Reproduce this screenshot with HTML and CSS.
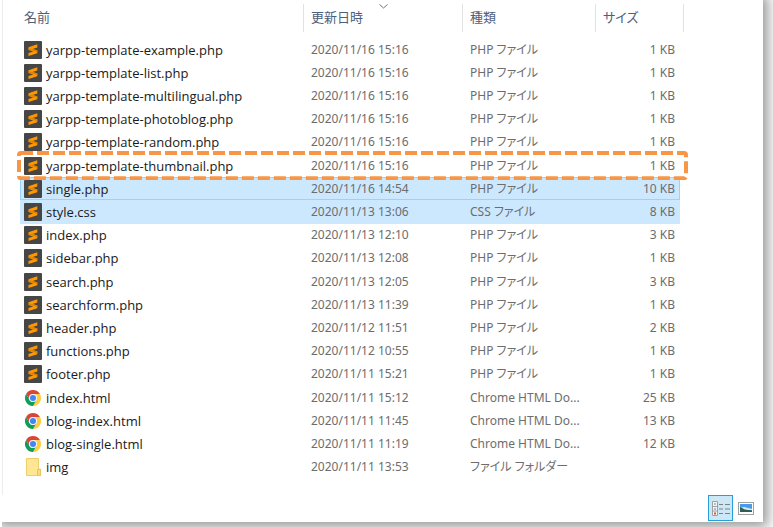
FILE: index.html
```html
<!DOCTYPE html>
<html lang="ja">
<head>
    <meta charset="UTF-8">
    <meta name="viewport" content="width=device-width, initial-scale=1">
    <title>Files</title>
    <link rel="stylesheet" href="styles.css">
</head>
<body>

    <!-- file icons -->
    <svg class="sprite" aria-hidden="true">
        <symbol id="sublime" viewBox="0 0 18 18">
            <rect width="18" height="18" rx="1" fill="#464646"/>
            <path d="M4.5 6.2 13.3 3.3V6.4L8.6 8 13.3 9.4V12.2L4.5 15V12L9.2 10.5 4.5 9Z" fill="#ff9800"/>
            <path d="M8.6 8 13.3 9.4V11L4.5 8.4V7.4Z" fill="#e08300"/>
        </symbol>
        <symbol id="chrome" viewBox="0 0 18 18">
            <circle cx="9" cy="9" r="8" fill="#fff"/>
            <path d="M2.07 5A8 8 0 0 1 15.93 5H9A4 4 0 0 0 5.54 11Z" fill="#db4437"/>
            <path d="M15.93 5A8 8 0 0 1 9 17L12.46 11A4 4 0 0 0 9 5Z" fill="#ffcd40"/>
            <path d="M9 17A8 8 0 0 1 2.07 5L5.54 11A4 4 0 0 0 12.46 11Z" fill="#0f9d58"/>
            <circle cx="9" cy="9" r="4" fill="#f1f1f1"/>
            <circle cx="9" cy="9" r="3" fill="#4285f4"/>
        </symbol>
        <symbol id="folder" viewBox="0 0 18 18">
            <path d="M2.5 .5H14.5V11H16.5V17.5H2.5Z" fill="#ffe694" stroke="#ecce6c"/>
            <path d="M13.5 17V11.5H16.5V17.5Z" fill="#f8dc80" stroke="#e6c660"/>
        </symbol>
    </svg>

    <div class="window">
        <main class="list">
            <table>
                <colgroup>
                    <col>
                    <col class="col-date">
                    <col class="col-type">
                    <col class="col-size">
                    <col class="col-end">
                </colgroup>
                <thead>
                    <tr>
                        <th><button type="button">名前</button></th>
                        <th class="sorted">
                            <button type="button">更新日時</button>
                            <svg class="caret" viewBox="0 0 9 5" aria-hidden="true"><path d="M.5 .5 4.5 4 8.5 .5" fill="none" stroke="#777"/></svg>
                        </th>
                        <th><button type="button">種類</button></th>
                        <th colspan="2"><button type="button">サイズ</button></th>
                    </tr>
                </thead>
                <tbody>
                    <tr>
                        <td><span class="file"><svg><use href="#sublime"/></svg>yarpp-template-example.php</span></td>
                        <td>2020/11/16 15:16</td><td>PHP ファイル</td><td>1 KB</td>
                    </tr>
                    <tr>
                        <td><span class="file"><svg><use href="#sublime"/></svg>yarpp-template-list.php</span></td>
                        <td>2020/11/16 15:16</td><td>PHP ファイル</td><td>1 KB</td>
                    </tr>
                    <tr>
                        <td><span class="file"><svg><use href="#sublime"/></svg>yarpp-template-multilingual.php</span></td>
                        <td>2020/11/16 15:16</td><td>PHP ファイル</td><td>1 KB</td>
                    </tr>
                    <tr>
                        <td><span class="file"><svg><use href="#sublime"/></svg>yarpp-template-photoblog.php</span></td>
                        <td>2020/11/16 15:16</td><td>PHP ファイル</td><td>1 KB</td>
                    </tr>
                    <tr>
                        <td><span class="file"><svg><use href="#sublime"/></svg>yarpp-template-random.php</span></td>
                        <td>2020/11/16 15:16</td><td>PHP ファイル</td><td>1 KB</td>
                    </tr>
                    <tr class="marked">
                        <td>
                            <span class="file"><svg><use href="#sublime"/></svg>yarpp-template-thumbnail.php</span>
                            <svg class="marker" aria-hidden="true"><rect x="2" y="2" rx="2"/></svg>
                        </td>
                        <td>2020/11/16 15:16</td><td>PHP ファイル</td><td>1 KB</td>
                    </tr>
                    <tr class="selected focused">
                        <td><span class="file"><svg><use href="#sublime"/></svg>single.php</span></td>
                        <td>2020/11/16 14:54</td><td>PHP ファイル</td><td>10 KB</td>
                    </tr>
                    <tr class="selected">
                        <td><span class="file"><svg><use href="#sublime"/></svg>style.css</span></td>
                        <td>2020/11/13 13:06</td><td>CSS ファイル</td><td>8 KB</td>
                    </tr>
                    <tr>
                        <td><span class="file"><svg><use href="#sublime"/></svg>index.php</span></td>
                        <td>2020/11/13 12:10</td><td>PHP ファイル</td><td>3 KB</td>
                    </tr>
                    <tr>
                        <td><span class="file"><svg><use href="#sublime"/></svg>sidebar.php</span></td>
                        <td>2020/11/13 12:08</td><td>PHP ファイル</td><td>1 KB</td>
                    </tr>
                    <tr>
                        <td><span class="file"><svg><use href="#sublime"/></svg>search.php</span></td>
                        <td>2020/11/13 12:05</td><td>PHP ファイル</td><td>3 KB</td>
                    </tr>
                    <tr>
                        <td><span class="file"><svg><use href="#sublime"/></svg>searchform.php</span></td>
                        <td>2020/11/13 11:39</td><td>PHP ファイル</td><td>1 KB</td>
                    </tr>
                    <tr>
                        <td><span class="file"><svg><use href="#sublime"/></svg>header.php</span></td>
                        <td>2020/11/12 11:51</td><td>PHP ファイル</td><td>2 KB</td>
                    </tr>
                    <tr>
                        <td><span class="file"><svg><use href="#sublime"/></svg>functions.php</span></td>
                        <td>2020/11/12 10:55</td><td>PHP ファイル</td><td>1 KB</td>
                    </tr>
                    <tr>
                        <td><span class="file"><svg><use href="#sublime"/></svg>footer.php</span></td>
                        <td>2020/11/11 15:21</td><td>PHP ファイル</td><td>1 KB</td>
                    </tr>
                    <tr>
                        <td><span class="file"><svg><use href="#chrome"/></svg>index.html</span></td>
                        <td>2020/11/11 15:12</td><td>Chrome HTML Do...</td><td>25 KB</td>
                    </tr>
                    <tr>
                        <td><span class="file"><svg><use href="#chrome"/></svg>blog-index.html</span></td>
                        <td>2020/11/11 11:45</td><td>Chrome HTML Do...</td><td>13 KB</td>
                    </tr>
                    <tr>
                        <td><span class="file"><svg><use href="#chrome"/></svg>blog-single.html</span></td>
                        <td>2020/11/11 11:19</td><td>Chrome HTML Do...</td><td>12 KB</td>
                    </tr>
                    <tr>
                        <td><span class="file"><svg><use href="#folder"/></svg>img</span></td>
                        <td>2020/11/11 13:53</td><td>ファイル フォルダー</td><td></td>
                    </tr>
                </tbody>
            </table>
        </main>

        <footer class="views">
            <button type="button" class="active" aria-label="詳細">
                <svg width="18" height="17" viewBox="0 0 18 17">
                    <path d="M.5 1.5H5.5V15.5H.5ZM.5 6.5H5.5M.5 11H5.5" fill="#f4f4f4" stroke="#a0a0a0"/>
                    <path d="M2 4H4" stroke="#888"/>
                    <path d="M2 9H4" stroke="#4a86d8"/>
                    <path d="M2 13.5H4" stroke="#e0503c" stroke-width="2"/>
                    <path d="M7 4.5H11M13 4.5H18M7 9H11M13 9H18M7 13.5H11M13 13.5H18" stroke="#808080"/>
                </svg>
            </button>
            <button type="button" aria-label="大アイコン">
                <svg width="16" height="13" viewBox="0 0 16 13">
                    <rect x=".5" y=".5" width="15" height="12" fill="#fff" stroke="#a0a0a0"/>
                    <rect x="2" y="2" width="12" height="8" fill="#4a9be8"/>
                    <path d="M2 6 6 5 14 7V8H2Z" fill="#d5ecfa"/>
                    <path d="M2 5 7 7.5 14 8.5V10H2Z" fill="#2f5f50"/>
                </svg>
            </button>
        </footer>
    </div>

</body>
</html>
```
FILE: styles.css
```css
* {
    box-sizing: border-box;
}

body {
    margin: 0;
    min-height: 100vh;
    padding: 0 10px 5px 2px;
    display: flex;
    overflow: hidden;
    background: #fff;
    font-family: "Noto Sans", "Noto Sans CJK JP", sans-serif;
    font-size: 12px;
    line-height: 18px;
    font-feature-settings: "palt";
    color: #1a1a1a;
}

.sprite {
    position: absolute;
    width: 0;
    height: 0;
}

/* the shadow only falls to the right and below */
.window {
    flex: 1;
    display: flex;
    flex-direction: column;
    background: #fff;
    box-shadow: 0 0 12px 5px #999;
    clip-path: inset(0 -10px -5px 0);
}

.list {
    flex: 1;
    border-left: 1px solid #ececec;
    padding: 4px 79px 15px 17px;
}

table {
    width: 100%;
    height: calc(100vh - 52px);
    table-layout: fixed;
    border-collapse: separate;
    border-spacing: 0;
}

.col-date {
    width: 159px;
}

.col-type {
    width: 133px;
}

.col-size {
    width: 84px;
}

.col-end {
    width: 4px;
}

/* header */
th {
    height: 28px;
    padding: 0 0 2px 4px;
    border-right: 1px solid #e2e2e2;
    text-align: left;
}

th + th {
    padding-left: 7px;
}

th button {
    padding: 0;
    border: none;
    background: none;
    font: inherit;
    font-size: 13px;
    font-weight: normal;
    color: #4c607a;
}

.sorted {
    position: relative;
}

.caret {
    position: absolute;
    top: 0;
    left: calc(50% - 4px);
    width: 9px;
    height: 5px;
}

/* gap between the header and the first row */
tbody::before {
    content: "";
    display: table-row;
    height: 6px;
}

/* rows */
td {
    height: 23px;
    padding: 0 0 0 7px;
    color: #6d6d6d;
    white-space: nowrap;
}

td:first-child {
    padding-left: 4px;
    font-family: "Open Sans", sans-serif;
    font-size: 13px;
    color: #1a1a1a;
}

td:nth-child(4) {
    padding-right: 5px;
    text-align: right;
}

.file {
    display: flex;
    align-items: center;
    gap: 4px;
}

.file svg {
    width: 18px;
    height: 18px;
}

.selected td {
    background: #cce8ff;
}

.focused td {
    border-top: 1px solid #99d1ff;
    border-bottom: 1px solid #99d1ff;
}

.focused td:first-child {
    border-left: 1px solid #99d1ff;
    padding-left: 3px;
}

.focused td:last-child {
    border-right: 1px solid #99d1ff;
    padding-right: 4px;
}

/* dashed frame round a row */
.marked {
    position: relative;
}

.marker {
    position: absolute;
    z-index: 1;
    top: -3px;
    left: -3px;
    width: calc(100% + 7px);
    height: calc(100% + 6px);
    pointer-events: none;
}

.marker rect {
    width: calc(100% - 4px);
    height: calc(100% - 4px);
    fill: none;
    stroke: #f79646;
    stroke-width: 4;
    stroke-dasharray: 12 4;
}

/* view buttons */
.views {
    display: flex;
    justify-content: flex-end;
    padding: 0 5px 1px 0;
}

.views button {
    width: 25px;
    height: 26px;
    padding: 0;
    display: flex;
    align-items: center;
    justify-content: center;
    border: 1px solid transparent;
    background: none;
}

.views .active {
    border: 1px solid #26a0da;
    background: #cce8f6;
}
```
